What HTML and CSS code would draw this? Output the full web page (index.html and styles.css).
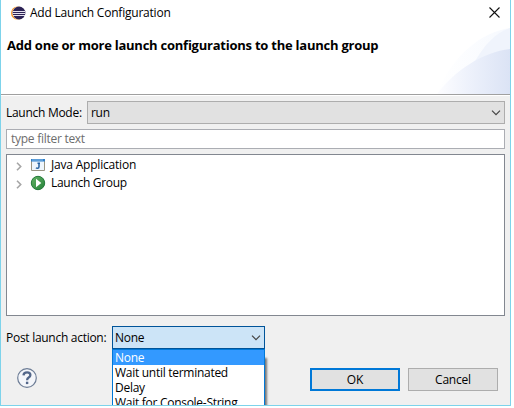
FILE: index.html
```html
<!DOCTYPE html>
<html lang="en">
<head>
<meta charset="utf-8">
<title>Add Launch Configuration</title>
<link rel="stylesheet" href="styles.css">
</head>
<body>
<main class="dialog">
  <header class="header">
    <svg class="swoosh" width="78" height="67" viewBox="0 0 78 67">
      <defs>
        <linearGradient id="low"><stop offset="0" stop-color="#fdfdff"/><stop offset=".45" stop-color="#edf1fb"/><stop offset="1" stop-color="#dbe3f5"/></linearGradient>
        <linearGradient id="high"><stop offset="0" stop-color="#fff"/><stop offset="1" stop-color="#f6f9fe"/></linearGradient>
      </defs>
      <path d="M5 67C20 28 50 5 78 1V67Z" fill="url(#high)"/>
      <path d="M41 38C52 18 63 6 78 1V30Z" fill="#f0f4fc"/>
      <path d="M5 67C23 43 51 25 78 22V67Z" fill="url(#low)"/>
    </svg>
    <div class="titlebar">
      <svg width="16" height="16" viewBox="0 0 16 16">
        <circle cx="7.600" cy="8" r="6.600" fill="#f7941e"/>
        <circle cx="8.700" cy="8" r="6.400" fill="#fff"/>
        <circle cx="9" cy="8" r="6.400" fill="#2c2255"/>
        <path d="M3 6.500H15M2.800 8.500H15.200M3 10.500H15" stroke="#e4e1ee"/>
      </svg>
      <span class="caption">Add Launch Configuration</span>
      <svg class="close" width="11" height="11" viewBox="0 0 11 11"><path d="M.5.5l10 10M10.500 .5l-10 10" stroke="#111" stroke-width="1.1"/></svg>
    </div>
    <h1 class="heading">Add one or more launch configurations to the launch group</h1>
  </header>
  <section class="content">
    <div class="mode">
      <span class="mode-label">Launch Mode:</span>
      <div class="combo"><span>run</span><svg width="10" height="6" viewBox="0 0 10 6"><path d="M1 .7l4 4 4-4" fill="none" stroke="#444" stroke-width="1.2"/></svg></div>
    </div>
    <div class="filter"><span>type filter text</span></div>
    <div class="tree">
      <div class="row">
        <svg class="chevron" width="6" height="9" viewBox="0 0 6 9"><path d="M1 .8l3.700 3.700L1 8.200" fill="none" stroke="#a6a6a6" stroke-width="1.600"/></svg>
        <svg width="16" height="16" viewBox="0 0 16 16">
          <path d="M1.500 2.500h13v11h-13z" fill="#eef6fd" stroke="#9a9583"/>
          <path d="M1 2h14v2.500H1z" fill="#2f7fc8"/>
          <path d="M2 3h11" stroke="#8bbde8"/>
          <path d="M9 6v3.700q0 1.600-1.500 1.600-1 0-1.500-.5M7.500 6.300h2.500" fill="none" stroke="#235f9f" stroke-width="1.500"/>
        </svg>
        <span class="java">Java Application</span>
      </div>
      <div class="row">
        <svg class="chevron" width="6" height="9" viewBox="0 0 6 9"><path d="M1 .8l3.700 3.700L1 8.200" fill="none" stroke="#a6a6a6" stroke-width="1.600"/></svg>
        <svg width="16" height="16" viewBox="0 0 16 16">
          <defs><linearGradient id="play" x2="1" y2="1"><stop stop-color="#65b365"/><stop offset="1" stop-color="#258239"/></linearGradient></defs>
          <circle cx="8" cy="8" r="6.700" fill="url(#play)" stroke="#23793a"/>
          <path d="M6 3.700l5.300 4.300L6 12.300z" fill="#fff"/>
        </svg>
        <span class="group">Launch Group</span>
      </div>
    </div>
    <div class="post">
      <span class="post-label">Post launch action:</span>
      <div class="combo combo-open"><span>None</span><svg width="10" height="6" viewBox="0 0 10 6"><path d="M1 .7l4 4 4-4" fill="none" stroke="#444" stroke-width="1.200"/></svg>
        <div class="menu">
          <div class="item selected">None</div>
          <div class="item">Wait until terminated</div>
          <div class="item">Delay</div>
          <div class="item">Wait for Console-String</div>
        </div>
      </div>
    </div>
    <footer class="footer">
      <svg class="help" width="22" height="22" viewBox="0 0 22 22">
        <circle cx="11" cy="11" r="9.300" fill="#f4f6fa" stroke="#6d7d96" stroke-width="1.200"/>
        <path d="M7.500 8.300Q7.700 5.300 11.100 5.300q3.300 0 3.300 2.700 0 1.600-1.700 2.600-1.600.9-1.600 2.700" fill="none" stroke="#53678a" stroke-width="2.300"/>
        <path d="M9.900 14.700h2.400v2.400H9.900z" fill="#53678a"/>
      </svg>
      <div class="button ok"><span>OK</span></div>
      <div class="button cancel"><span>Cancel</span></div>
    </footer>
  </section>
</main>
</body>
</html>
```
FILE: styles.css
```css
* { box-sizing: border-box; }
html { overflow: hidden; background: #fff; }
body { margin: 0; font: 12px/16px "Open Sans", "Noto Sans", sans-serif; color: #000; overflow: hidden; }
span, h1 { white-space: nowrap; }
svg { display: block; flex: none; }
.dialog { width: 511px; height: 406px; overflow: hidden; border: 1px solid #7dd3eb; border-top: 0; background: #f0f0f0; }
.header { position: relative; height: 96px; background: #fff; border-bottom: 1px solid #fff; box-shadow: inset 0 -1px #a0a0a0; }
.swoosh { position: absolute; right: 0; bottom: 1px; }
.titlebar { display: flex; align-items: center; height: 25px; padding: 0 10px 0 9px; }
.caption { margin-left: 4px; letter-spacing: -.22px; }
.close { margin-left: auto; }
.heading { position: relative; margin: 11px 0 0 6px; font-size: 13px; line-height: 18px; font-weight: 700; letter-spacing: -.24px; }
.content { padding: 5px 5px 0; }
.mode, .post { display: flex; align-items: center; height: 23px; letter-spacing: -.28px; }
.mode-label { width: 81px; }
.combo { display: flex; flex: 1; align-items: center; justify-content: space-between; height: 23px; padding: 0 3px; border: 1px solid #adadad; background: #e1e1e1; }
.filter { height: 20px; margin-top: 5px; padding: 1px 4px; border: 1px solid #abadb3; background: #fff; color: #6d6d6d; letter-spacing: -.27px; }
.tree { height: 162px; margin-top: 5px; padding: 1px 8px; border: 1px solid #828790; background: #fff; }
.row { display: flex; align-items: center; height: 18px; }
.chevron { margin: 2px 8px 0 1px; }
.row span { margin-left: 5px; letter-spacing: -.2px; }
.group { position: relative; }
.row .group { letter-spacing: -.3px; }
.post { margin-top: 10px; }
.post-label { width: 106px; }
.combo-open { position: relative; flex: none; width: 153px; padding-left: 2px; border-color: #005499; background: #cce4f7; }
.menu { position: absolute; top: 22px; left: -1px; width: 153px; height: 60px; border: 1px solid #0078d7; border-bottom: 0; background: #fff; box-shadow: 3px 8px 2px -1px #777; }
.item { height: 15px; padding-left: 2px; line-height: 15px; white-space: nowrap; }
.selected { background: #3399ff; color: #fff; }
.footer { display: flex; height: 23px; margin-top: 19px; padding-left: 10px; }
.help { margin-top: -1px; }
.button { display: flex; align-items: center; justify-content: center; width: 90px; height: 23px; border: 1px solid #adadad; background: #e1e1e1; letter-spacing: -.2px; }
.ok { margin-left: 272px; border: 2px solid #0078d7; }
.cancel { margin-left: 8px; }
```
